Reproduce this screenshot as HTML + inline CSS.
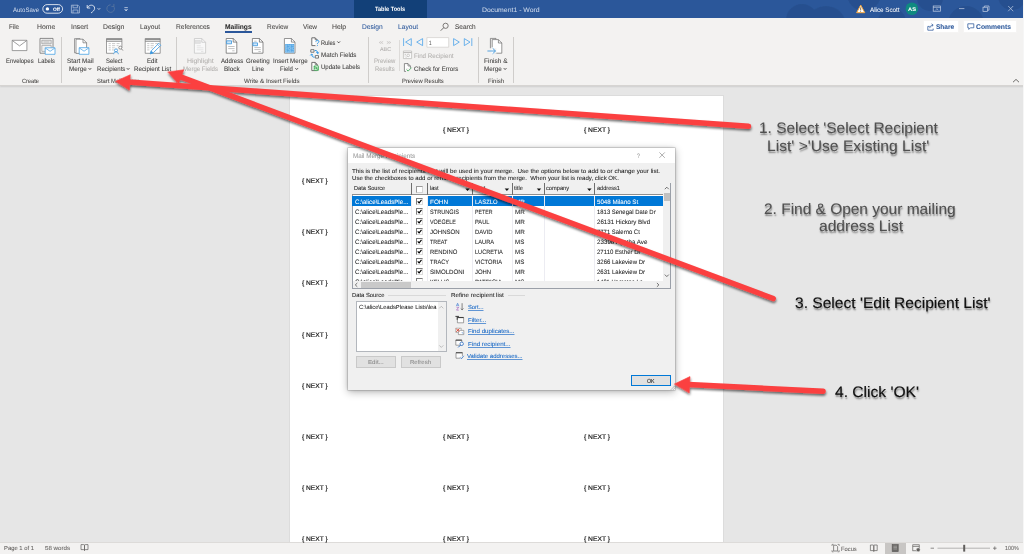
<!DOCTYPE html>
<html lang="en"><head><meta charset="utf-8"><title>Document1 - Word</title>
<style>
*{box-sizing:border-box;margin:0;padding:0}
html,body{width:1024px;height:554px;overflow:hidden;background:#e6e6e6;font-family:"Liberation Sans",sans-serif}
#app{position:relative;width:1024px;height:554px;overflow:hidden;background:#e6e6e6}
.a{position:absolute}
.t{position:absolute;white-space:nowrap;transform-origin:0 50%;display:block;text-rendering:geometricPrecision;-webkit-text-stroke:0.06px}
#titlebar{left:0;top:0;width:1024px;height:18px;background:#2b579a;overflow:hidden}
#tabletools{left:354px;top:0;width:73px;height:18px;background:#124078}
#ribbon{left:0;top:18px;width:1024px;height:67.6px;background:#f3f2f1;border-bottom:1px solid #d6d4d2;box-shadow:0 1px 1.5px rgba(0,0,0,0.10)}
.vsep{position:absolute;width:1px;background:#cfcdcb;top:36.5px;height:46px}
#docpage{left:289px;top:95px;width:434.5px;height:448px;background:#fff;border:1px solid #dcdcdc;border-bottom:none}
#status{left:0;top:542px;width:1024px;height:12px;background:#f3f2f1;border-top:1px solid #dddbd9}
svg{position:absolute;overflow:visible}
/* dialog */
#dlg{left:348px;top:148px;width:327px;height:242px;background:#f0f0f0;box-shadow:0 0 0 0.5px rgba(110,110,110,0.45),0 2px 8px rgba(0,0,0,0.30),0 0 3px rgba(0,0,0,0.16)}
#dlgtitle{left:0;top:0;width:100%;height:15px;background:#fff}
.btn{position:absolute;background:#e1e1e1;border:1px solid #c9c9c9}
.cb{position:absolute;width:6.8px;height:6.8px;background:#fff;border:1px solid;border-color:#7d7d7d #dcdcdc #dcdcdc #7d7d7d}
</style></head>
<body><div id="app">
<!-- ===== document area ===== -->
<div class="a" id="docpage"></div>
<!-- ===== title bar ===== -->
<div class="a" id="titlebar">
  <svg width="260" height="18" style="left:780px;top:0" viewBox="0 0 260 18"><defs><filter id="cb"><feGaussianBlur stdDeviation="0.7"/></filter></defs>
    <g fill="#27508f" filter="url(#cb)">
      <circle cx="22" cy="20" r="16"/><circle cx="46" cy="26" r="20"/><circle cx="84" cy="-6" r="17"/>
      <circle cx="112" cy="22" r="14"/><circle cx="150" cy="-2" r="13"/><circle cx="186" cy="24" r="18"/><circle cx="232" cy="-4" r="14"/>
    </g>
  </svg>
  <div class="a" id="tabletools"></div>
</div>
<svg width="140" height="18" style="left:0;top:0" viewBox="0 0 140 18">
  <g fill="none" stroke="#fff" stroke-width="0.8">
    <rect x="42.8" y="4.6" width="19.8" height="8.6" rx="4.3"/>
    <circle cx="47.4" cy="8.9" r="1.7" fill="#fff" stroke="none"/>
  </g>
  <g fill="none" stroke="#a9bbd8" stroke-width="0.8" stroke-linejoin="round">
    <path d="M71.4 5.2h6.6l1.4 1.4v6.4h-8z"/><path d="M73 5.2v2.6h4.4V5.2M73 13v-3h4.8v3"/>
  </g>
  <g fill="none" stroke="#e4eaf4" stroke-width="0.9">
    <path d="M87.2 5v3h3M87.4 7.8c1-1.8 2.4-2.6 4-2.6 2 0 3.2 1.3 3.2 3 0 2.2-1.8 3.4-3.6 4.8"/>
    <path d="M97.6 8.2l1.3 1.3 1.3-1.3" stroke-width="0.8"/>
  </g>
  <g fill="none" stroke="#56749f" stroke-width="0.9">
    <path d="M113.6 6.2a3.8 3.8 0 1 1-3-1.4M113.9 3.9v2.5h-2.5"/>
  </g>
  <g fill="none" stroke="#c9d5e8" stroke-width="0.8"><path d="M124.4 7.6h3.4"/><path d="M124.6 9.4l1.5 1.5 1.5-1.5" fill="#c9d5e8"/></g>
</svg>
<svg width="170" height="18" style="left:854px;top:0" viewBox="854 0 170 18">
  <path d="M860.7 5.1l4.1 7.6h-8.2z" fill="#fff" stroke="#f2a33a" stroke-width="1" stroke-linejoin="round"/>
  <path d="M860.7 7.4v3" stroke="#6b4a12" stroke-width="0.8"/><circle cx="860.7" cy="11.5" r="0.45" fill="#6b4a12"/>
  <circle cx="911.9" cy="8.7" r="6.3" fill="#0f8a80"/>
  <g fill="none" stroke="#c6d1e5" stroke-width="0.7">
    <rect x="933.2" y="6" width="7.4" height="5.2"/><path d="M933.2 7.4h7.4" stroke-width="0.6"/><path d="M935.6 9.9l1.3-1.2 1.3 1.2" stroke-width="0.7"/>
    <path d="M959 8.6h5.4"/>
    <rect x="983" y="7.2" width="4.6" height="4.2"/><path d="M984.4 7.2V6h4.6v4.2h-1.4"/>
    <path d="M1008.2 6l5 5.2M1013.2 6l-5 5.2"/>
  </g>
</svg>

<!-- ===== ribbon ===== -->
<div class="a" id="ribbon"></div>
<div class="a" style="left:225px;top:30.9px;width:26.6px;height:1.9px;background:#2b579a"></div>
<div class="vsep" style="left:61px"></div>
<div class="vsep" style="left:176px"></div>
<div class="vsep" style="left:367.5px"></div>
<div class="vsep" style="left:478px"></div>
<div class="vsep" style="left:513px"></div>
<div class="vsep" style="left:399.3px;top:40px;height:30.5px;background:#dddbd9"></div>
<svg width="520" height="50" style="left:0;top:34px" viewBox="0 34 520 50">
<g fill="none" stroke="#767676" stroke-width="0.7" stroke-linejoin="round">
  <!-- Envelopes -->
  <rect x="12.2" y="40.3" width="14.7" height="10.3" fill="#fff"/>
  <path d="M12.4 40.6l7.15 5.3 7.15-5.3"/>
  <!-- Labels -->
  <rect x="40" y="38.4" width="13" height="14.8" fill="#fafafa" stroke="#6e6e6e" stroke-width="0.8"/>
  <rect x="41.8" y="40.2" width="9.4" height="3.6" fill="#e4e4e4" stroke="#8a8a8a" stroke-width="0.6"/>
  <path d="M43.6 42h5.6" stroke="#9a9a9a" stroke-width="0.5"/>
  <rect x="41.8" y="45.4" width="9.4" height="6" fill="#f1f1f1" stroke="#8a8a8a" stroke-width="0.6"/>
  <rect x="45.2" y="47.8" width="9.8" height="6.5" fill="#fff" stroke="#4aa3e6" stroke-width="0.8"/>
  <path d="M45.4 48.1l4.7 3.2 4.7-3.2" stroke="#4aa3e6" stroke-width="0.75"/>
  <!-- Start Mail Merge -->
  <path d="M74.5 38.6h5.5v14.2h-5.5z" fill="#fafafa" stroke="#7a7a7a"/>
  <path d="M76 39.2h7l3.6 3.6v10.6h-10.6z" fill="#fff" stroke="#6e6e6e"/>
  <path d="M83 39.2v3.6h3.6" stroke="#6e6e6e"/>
  <rect x="79.2" y="47.7" width="9.7" height="6.6" fill="#fff" stroke="#4aa3e6" stroke-width="0.8"/>
  <path d="M79.4 48l4.65 3.2 4.65-3.2" stroke="#4aa3e6" stroke-width="0.75"/>
  <!-- Select Recipients -->
  <rect x="106.5" y="38.5" width="15.4" height="14.8" fill="#fff"/>
  <path d="M106.5 39.4h15.4M106.5 41.2h15.4" stroke-width="0.9"/>
  <g stroke="#9a9a9a" stroke-width="0.55"><path d="M108.6 43.6h2.2M112 43.6h3.2M116.6 43.6h3M108.6 45.7h2.2M112 45.7h3.2M116.6 45.7h2M108.6 47.8h2.2M112 47.8h3.2M108.6 49.9h2.2M112 49.9h2"/></g>
  <rect x="113.6" y="47.6" width="9.5" height="7" fill="#f3f2f1" stroke="none"/>
  <circle cx="120.3" cy="47.6" r="1.5" fill="#fff" stroke="#6a6a6a" stroke-width="0.7"/>
  <path d="M121.4 48.8l1.5 1.7" stroke="#6a6a6a" stroke-width="0.8"/>
  <circle cx="116" cy="50.4" r="1.5" fill="#fff" stroke="#3a96dd" stroke-width="0.8"/>
  <path d="M113.7 54.2c0-1.6 1-2.4 2.3-2.4s2.3 0.8 2.3 2.4" stroke="#3a96dd" stroke-width="0.8"/>
  <!-- Edit Recipient List -->
  <rect x="145.2" y="38.5" width="15" height="14.8" fill="#fff"/>
  <path d="M145.2 39.4h15M145.2 41.2h15" stroke-width="0.9"/>
  <g stroke="#9a9a9a" stroke-width="0.55"><path d="M147.2 43.6h2.2M150.6 43.6h3.2M155.2 43.6h3M147.2 45.7h2.2M150.6 45.7h3.2M147.2 47.8h2.2M150.6 47.8h2.2M147.2 49.9h2.2"/></g>
  <path d="M150.3 53.8l0.9-2.9 7.6-7.6 2 2-7.6 7.6z" fill="#fff" stroke="#3a96dd" stroke-width="0.8"/>
  <path d="M150.3 53.8l0.9-2.9 2 2z" fill="#3a96dd" stroke="#3a96dd" stroke-width="0.5"/>
  <path d="M157.6 44.5l2 2" stroke="#3a96dd" stroke-width="0.6"/>
  <!-- Highlight Merge Fields (disabled) -->
  <g stroke="#c3c3c3">
    <path d="M194.4 38.5h7.4l3.8 3.8v10.9h-11.2z" fill="#f8f8f8"/>
    <path d="M201.8 38.5v3.8h3.8"/>
    <rect x="195.2" y="40.4" width="5.2" height="3" fill="#e2e2e2" stroke="#d0d0d0" stroke-width="0.5"/>
    <path d="M196.8 45.8h4M196.8 47.8h6.6M196.8 49.8h6.6M201 51.6h2.4" stroke="#d2d2d2" stroke-width="0.55"/>
  </g>
  <!-- Address Block -->
  <path d="M226.2 38.5h7l3.6 3.6v11.1h-10.6z" fill="#fff" stroke="#5e5e5e"/>
  <path d="M233.2 38.5v3.6h3.6" stroke="#5e5e5e"/>
  <rect x="226.6" y="40.8" width="4.9" height="3" fill="#cfe6f8" stroke="#3a96dd" stroke-width="0.8"/>
  <path d="M228.2 46.5h6.4M228.2 48.6h6.4M232.2 50.8h2.4" stroke="#9a9a9a" stroke-width="0.6"/>
  <!-- Greeting Line -->
  <path d="M252.4 38.5h7l3.6 3.6v11.1h-10.6z" fill="#fff" stroke="#5e5e5e"/>
  <path d="M259.4 38.5v3.6h3.6" stroke="#5e5e5e"/>
  <path d="M254.2 41.2h2.4" stroke="#9a9a9a" stroke-width="0.6"/>
  <rect x="252.9" y="42.9" width="4.6" height="2.8" fill="#cfe6f8" stroke="#3a96dd" stroke-width="0.8"/>
  <path d="M254.4 47.6h6.4M254.4 49.6h6.4M258.4 51.5h2.4" stroke="#9a9a9a" stroke-width="0.6"/>
  <!-- Insert Merge Field -->
  <path d="M284.4 38.5h7l3.6 3.6v11.1h-10.6z" fill="#fff" stroke="#6a6a6a"/>
  <path d="M291.4 38.5v3.6h3.6" stroke="#6a6a6a"/>
  <rect x="285.2" y="44" width="9" height="8.6" fill="#56a8e6" stroke="none"/>
  <g stroke="#cfe6f8" stroke-width="0.55" stroke-dasharray="1 0.6"><rect x="286.2" y="45.1" width="3" height="2.8"/><rect x="290.2" y="45.1" width="3" height="2.8"/><rect x="286.2" y="48.9" width="3" height="2.8"/><rect x="290.2" y="48.9" width="3" height="2.8"/></g>
  <!-- Rules -->
  <path d="M311.8 37.8h3.4l2 2v5.8h-5.4z" fill="#fff" stroke="#585858" stroke-width="0.85"/>
  <path d="M315.2 37.8v2h2" stroke="#585858" stroke-width="0.7"/>
  <rect x="315.4" y="40.3" width="4" height="6" fill="#f3f2f1" stroke="none"/>
  <path d="M315.9 41.7c0-0.9 0.6-1.4 1.5-1.4s1.5 0.5 1.5 1.3c0 1.1-1.5 1.1-1.5 2.3" stroke="#2f97e8" stroke-width="1"/>
  <circle cx="317.4" cy="45.3" r="0.55" fill="#2f97e8" stroke="none"/>
  <!-- Match Fields -->
  <rect x="310.8" y="49.7" width="3.2" height="2.5" fill="#fff" stroke="#585858" stroke-width="0.8"/>
  <rect x="315.3" y="55.6" width="3.2" height="2.5" fill="#fff" stroke="#585858" stroke-width="0.8"/>
  <path d="M314.8 50.4c2 0 2.9 0.9 2.9 2.8M316.3 52.3l1.4 1.4 1.4-1.4" stroke="#2f97e8" stroke-width="1"/>
  <path d="M314.6 57.2c-2 0-2.9-0.9-2.9-2.8M310.3 55.4l1.4-1.4 1.4 1.4" stroke="#2f97e8" stroke-width="1"/>
  <!-- Update Labels -->
  <path d="M311.8 62.4h3.4l2 2v6.2h-5.4z" fill="#fff" stroke="#585858" stroke-width="0.85"/>
  <path d="M315.2 62.4v2h2" stroke="#585858" stroke-width="0.7"/>
  <rect x="313.7" y="65.5" width="5.2" height="5.2" rx="0.8" fill="#4db263" stroke="none"/>
  <path d="M315 67.6a1.5 1.5 0 0 1 2.6-0.6M317.7 68.5a1.5 1.5 0 0 1-2.6 0.6" stroke="#fff" stroke-width="0.7"/>
  <path d="M317.8 66.1v1.1h-1.1M314.9 70v-1.1h1.1" stroke="#fff" stroke-width="0.6"/>
  <!-- Preview Results icon (disabled) -->
  <g stroke="#bdbbb9" stroke-width="0.6"><path d="M381.2 41.3l-2 1.2 2 1.2M383.2 41.3l-2 1.2 2 1.2M386.8 41.3l2 1.2-2 1.2M388.8 41.3l2 1.2-2 1.2"/></g>
  <!-- record nav -->
  <g stroke="#4aa2ea" stroke-width="0.8">
    <path d="M403.6 38.2v7.8"/><path d="M411.3 38.6v7l-5.7-3.5z"/>
    <path d="M422.6 38.6v7l-5.9-3.5z"/>
    <path d="M453.6 38.6v7l5.7-3.5z"/>
    <path d="M464.3 38.6v7l5.7-3.5z"/><path d="M471.8 38.2v7.8"/>
  </g>
  <rect x="426.9" y="37.6" width="21.8" height="9.6" fill="#fff" stroke="#d0cecc" stroke-width="0.7"/>
  <!-- Find Recipient icon (disabled) -->
  <g stroke="#b9b7b5" stroke-width="0.7">
    <rect x="403.4" y="51" width="8.2" height="7.6" fill="#fafafa"/>
    <path d="M403.4 52.6h8.2" stroke-width="1"/>
    <circle cx="408.2" cy="55.4" r="1.3"/><path d="M407.2 56.4l-1.4 1.4"/>
    <path d="M404.6 54.4h1.4M404.6 56h1"/>
  </g>
  <!-- Check for Errors -->
  <path d="M404.4 63.6h3.6l2.4 2.4v5.4h-6z" fill="#fff" stroke="#5e5e5e" stroke-width="0.7"/>
  <path d="M408 63.6v2.4h2.4" stroke="#5e5e5e" stroke-width="0.6"/>
  <rect x="406" y="68" width="6" height="4" fill="#f3f2f1" stroke="none"/>
  <path d="M406.6 69.6l1.5 1.5 3.4-3.4" stroke="#3aa655" stroke-width="0.85"/>
  <!-- Finish & Merge -->
  <path d="M490.4 38.4h5.6v1.2" stroke="#6a6a6a"/>
  <path d="M490.4 38.4v13" stroke="#6a6a6a"/>
  <path d="M492.2 39.6h6.2l3.4 3.4v10.2h-9.6z" fill="#fff" stroke="#6a6a6a"/>
  <path d="M498.4 39.6v3.4h3.4" stroke="#6a6a6a"/>
  <rect x="487" y="48.2" width="9.4" height="5.6" fill="#f3f2f1" stroke="none"/>
  <path d="M492.2 47v6.2h2" stroke="#fff" stroke-width="1.2"/>
  <path d="M487.4 51h8M492.6 48.2l2.9 2.8-2.9 2.8" stroke="#3a96dd" stroke-width="0.85"/>
</g>
<!-- dropdown chevrons -->
<g fill="none" stroke="#3b3a39" stroke-width="0.95">
  <path d="M88.6 68.2l1.3 1.3 1.3-1.3"/>
  <path d="M126.8 68.2l1.3 1.3 1.3-1.3"/>
  <path d="M295.4 68.2l1.3 1.3 1.3-1.3"/>
  <path d="M337.4 41.5l1.3 1.3 1.3-1.3"/>
  <path d="M503.8 68.2l1.3 1.3 1.3-1.3"/>
</g>
</svg>
<!-- search, share, comments, collapse -->
<svg width="10" height="10" style="left:439.6px;top:21.6px" viewBox="0 0 10 10"><circle cx="5.6" cy="3.8" r="2.6" fill="none" stroke="#5f5d5b" stroke-width="0.8"/><path d="M3.7 5.7L0.7 8.7" stroke="#5f5d5b" stroke-width="0.9"/></svg>
<div class="a" style="left:923px;top:20px;width:36px;height:12.5px;background:#fff;border:1px solid #f5f4f3;border-radius:1px"></div>
<div class="a" style="left:963px;top:20px;width:54px;height:12.5px;background:#fff;border:1px solid #f5f4f3;border-radius:1px"></div>
<svg width="8" height="8" style="left:926.6px;top:22.6px" viewBox="0 0 8 8"><g fill="none" stroke="#2b579a" stroke-width="0.75"><path d="M2.6 3.4H0.8v3.8h5.4V5.6"/><path d="M2.8 5.2c0-2 1.2-3 3-3M4.6 0.8l1.6 1.4-1.6 1.4"/></g></svg>
<svg width="8" height="8" style="left:966.6px;top:22.8px" viewBox="0 0 8 8"><path d="M0.8 0.8h6v4h-3.4l-1.6 1.6v-1.6h-1z" fill="none" stroke="#2b579a" stroke-width="0.75" stroke-linejoin="round"/></svg>
<svg width="8" height="6" style="left:1011.6px;top:78.2px" viewBox="0 0 8 6"><path d="M1 4.2l3-2.8 3 2.8" fill="none" stroke="#5f5d5b" stroke-width="0.9"/></svg>

<!-- ===== status bar ===== -->
<div class="a" id="status"></div>
<svg width="10" height="10" style="left:79.6px;top:543.4px" viewBox="0 0 10 10"><g fill="none" stroke="#605e5c" stroke-width="0.7"><path d="M1 1.6h2.6c0.6 0 0.9 0.3 0.9 0.8V7.4c0-0.5-0.3-0.8-0.9-0.8H1zM8 1.6H5.4c-0.6 0-0.9 0.3-0.9 0.8V7.4c0-0.5 0.3-0.8 0.9-0.8H8z"/></g></svg>
<div class="a" style="left:884.8px;top:542.6px;width:20.8px;height:11.4px;background:#c8c6c4"></div>
<svg width="200" height="12" style="left:828px;top:542px" viewBox="828 542 200 12">
  <g fill="none" stroke="#605e5c" stroke-width="0.7">
    <path d="M833.6 545.2h2.6l1.4 1.4v4.4h-4z"/><path d="M832 546v-1.6h1.6M839.2 550.2v1.6h-1.6M832 550.2v1.6h1.6M837.6 544.4h1.6v1.6" stroke-width="0.6"/>
    <path d="M870.4 545h2.6c0.5 0 0.8 0.3 0.8 0.7v5.6c0-0.4-0.3-0.7-0.8-0.7h-2.6zM877.2 545h-2.6c-0.5 0-0.8 0.3-0.8 0.7v5.6c0-0.4 0.3-0.7 0.8-0.7h2.6z"/>
    <rect x="892.2" y="544.6" width="6" height="7" fill="#6b6967"/>
    <path d="M893.4 546.2h3.6M893.4 547.6h3.6M893.4 549h3.6" stroke="#c8c6c4" stroke-width="0.5"/>
    <rect x="912.8" y="544.8" width="6.4" height="6"/><path d="M912.8 546.4h6.4"/>
    <circle cx="918.2" cy="549.8" r="2" fill="#605e5c" stroke="#f3f2f1" stroke-width="0.5"/>
    <path d="M930.6 548.2h3.4"/>
    <path d="M937.5 548.2h52.5" stroke="#8a8886" stroke-width="0.6"/>
    <rect x="963.2" y="544.8" width="2" height="6.8" fill="#605e5c" stroke="none"/>
    <path d="M993 548.2h3.6M994.8 546.4v3.6"/>
  </g>
</svg>

<!-- ===== dialog ===== -->
<div class="a" id="dlg"><div class="a" id="dlgtitle"></div></div>
<svg width="8" height="8" style="left:659.4px;top:152.2px" viewBox="0 0 8 8"><path d="M0.4 0.4 L5.8 5.8 M5.8 0.4 L0.4 5.8" stroke="#8c8c8c" stroke-width="0.7" fill="none"/></svg>
<!-- table -->
<div class="a" style="left:351.5px;top:182.5px;width:319.7px;height:106.6px;background:#fff;border:1px solid #9a9fa8"></div>
<div class="a" style="left:352px;top:183px;width:310.5px;height:12.2px;background:#f0f0f0;border-bottom:0.7px solid #8f8f8f"></div>
<!-- selected row -->
<div class="a" style="left:352px;top:196px;width:59.5px;height:9.6px;background:#0078d7"></div>
<div class="a" style="left:427.5px;top:196px;width:235px;height:9.6px;background:#0078d7"></div>
<!-- column separators -->
<div class="a" style="left:411.2px;top:183px;width:0.7px;height:12.2px;background:#6e6e6e"></div>
<div class="a" style="left:427.2px;top:183px;width:0.7px;height:12.2px;background:#6e6e6e"></div>
<div class="a" style="left:472.2px;top:183px;width:0.7px;height:12.2px;background:#6e6e6e"></div>
<div class="a" style="left:512.2px;top:183px;width:0.7px;height:12.2px;background:#6e6e6e"></div>
<div class="a" style="left:544.1px;top:183px;width:0.7px;height:12.2px;background:#6e6e6e"></div>
<div class="a" style="left:594.3px;top:183px;width:0.7px;height:12.2px;background:#6e6e6e"></div>
<div class="a" style="left:411.2px;top:195.5px;width:0.6px;height:85.5px;background:#ececf2"></div>
<div class="a" style="left:427.2px;top:195.5px;width:0.6px;height:85.5px;background:#ececf2"></div>
<div class="a" style="left:472.2px;top:195.5px;width:0.6px;height:85.5px;background:#ececf2"></div>
<div class="a" style="left:512.2px;top:195.5px;width:0.6px;height:85.5px;background:#ececf2"></div>
<div class="a" style="left:544.1px;top:195.5px;width:0.6px;height:85.5px;background:#ececf2"></div>
<div class="a" style="left:594.3px;top:195.5px;width:0.6px;height:85.5px;background:#ececf2"></div>
<!-- header dropdown arrows -->
<svg width="320" height="14" style="left:352px;top:183px" viewBox="352 183 320 14">
  <g fill="#111"><path d="M465.3 188.6h4.4l-2.2 2.4z"/><path d="M504.7 188.6h4.4l-2.2 2.4z"/><path d="M536.8 188.6h4.4l-2.2 2.4z"/><path d="M587.2 188.6h4.4l-2.2 2.4z"/></g>
</svg>
<!-- scrollbars -->
<div class="a" style="left:663px;top:183px;width:7px;height:105px;background:#f0f0f0"></div>
<div class="a" style="left:664.3px;top:192.5px;width:5.6px;height:8.6px;background:#c1c1c1"></div>
<div class="a" style="left:353px;top:281px;width:310px;height:7px;background:#f0f0f0"></div>
<div class="a" style="left:361px;top:281.6px;width:50px;height:6.6px;background:#c9c9c9"></div>
<svg width="320" height="108" style="left:352px;top:183px" viewBox="352 183 320 108">
  <g fill="none" stroke="#505050" stroke-width="0.8">
    <path d="M664.8 189.2l2-2 2 2"/><path d="M664.8 274.6l2 2 2-2"/>
    <path d="M357.3 283l-2 1.9 2 1.9"/><path d="M656.9 283l2 1.9-2 1.9"/>
  </g>
</svg>
<!-- checkboxes -->
<div class="cb" style="left:416px;top:185.6px;width:7.2px;height:7.5px;border-color:#9a9a9a #d4d4d4 #d4d4d4 #9a9a9a"></div>
<div class="cb" style="left:416px;top:197.8px"></div>
<svg width="7" height="7" style="left:416px;top:197.8px" viewBox="0 0 7 7"><path d="M1.7 3.4l1.4 1.5 2.4-3" fill="none" stroke="#000" stroke-width="1.15"/></svg>
<div class="cb" style="left:416px;top:208.0px"></div>
<svg width="7" height="7" style="left:416px;top:208.0px" viewBox="0 0 7 7"><path d="M1.7 3.4l1.4 1.5 2.4-3" fill="none" stroke="#000" stroke-width="1.15"/></svg>
<div class="cb" style="left:416px;top:218.0px"></div>
<svg width="7" height="7" style="left:416px;top:218.0px" viewBox="0 0 7 7"><path d="M1.7 3.4l1.4 1.5 2.4-3" fill="none" stroke="#000" stroke-width="1.15"/></svg>
<div class="cb" style="left:416px;top:228.0px"></div>
<svg width="7" height="7" style="left:416px;top:228.0px" viewBox="0 0 7 7"><path d="M1.7 3.4l1.4 1.5 2.4-3" fill="none" stroke="#000" stroke-width="1.15"/></svg>
<div class="cb" style="left:416px;top:238.0px"></div>
<svg width="7" height="7" style="left:416px;top:238.0px" viewBox="0 0 7 7"><path d="M1.7 3.4l1.4 1.5 2.4-3" fill="none" stroke="#000" stroke-width="1.15"/></svg>
<div class="cb" style="left:416px;top:248.1px"></div>
<svg width="7" height="7" style="left:416px;top:248.1px" viewBox="0 0 7 7"><path d="M1.7 3.4l1.4 1.5 2.4-3" fill="none" stroke="#000" stroke-width="1.15"/></svg>
<div class="cb" style="left:416px;top:258.1px"></div>
<svg width="7" height="7" style="left:416px;top:258.1px" viewBox="0 0 7 7"><path d="M1.7 3.4l1.4 1.5 2.4-3" fill="none" stroke="#000" stroke-width="1.15"/></svg>
<div class="cb" style="left:416px;top:268.1px"></div>
<svg width="7" height="7" style="left:416px;top:268.1px" viewBox="0 0 7 7"><path d="M1.7 3.4l1.4 1.5 2.4-3" fill="none" stroke="#000" stroke-width="1.15"/></svg>
<div class="cb" style="left:416px;top:278.2px;height:2.8px;border-bottom:none"></div>
<!-- data source group -->
<div class="a" style="left:388px;top:294.5px;width:58px;height:0.6px;background:#d9d9d9"></div>
<div class="a" style="left:508px;top:294.5px;width:17px;height:0.6px;background:#d9d9d9"></div>
<div class="a" style="left:356.2px;top:301.2px;width:90.5px;height:50.4px;background:#fff;border:1px solid #b3b7bd"></div>
<div class="a" style="left:437.6px;top:301.8px;width:8.5px;height:49.2px;background:#f0f0f0"></div>
<svg width="10" height="50" style="left:437px;top:302px" viewBox="437 302 10 50"><g fill="none" stroke="#a6a6a6" stroke-width="0.7"><path d="M439.3 308.3l2-2 2 2"/><path d="M439.3 345.4l2 2 2-2"/></g></svg>
<div class="btn" style="left:356.2px;top:356.2px;width:39.4px;height:11.6px"></div>
<div class="btn" style="left:401.2px;top:356.2px;width:39.4px;height:11.6px"></div>
<div class="btn" style="left:631.2px;top:374.9px;width:39.6px;height:11.4px;border:1px solid #0078d7"></div>
<svg width="6" height="6" style="left:669.6px;top:384.8px" viewBox="0 0 6 6"><path d="M0.6 5l4.4-4.4M2.8 5l2.2-2.2" stroke="#a8a8a8" stroke-width="0.7" fill="none"/></svg>
<svg width="14" height="62" style="left:453px;top:300px" viewBox="453 300 14 62">
<g fill="none" stroke-linejoin="round">
  <!-- sort -->
  <path d="M456.3 306.2l1.3-3 1.3 3M456.8 305.2h1.6" stroke="#3c7bd0" stroke-width="0.6"/>
  <path d="M456.5 307.3h2.2l-2.2 2.8h2.3" stroke="#9a4fb5" stroke-width="0.6"/>
  <path d="M462.1 303.2v6.6M460.7 308.5l1.4 1.4 1.4-1.4" stroke="#555" stroke-width="0.7"/>
  <!-- filter -->
  <rect x="457.4" y="317.4" width="6.2" height="5.4" fill="#fdfdfd" stroke="#666" stroke-width="0.6"/>
  <path d="M457.4 317.6h6.2" stroke="#333" stroke-width="1"/>
  <path d="M455.4 316.4h3.6M457.2 316.4v3.4" stroke="#333" stroke-width="0.9"/>
  <!-- find duplicates -->
  <rect x="455.8" y="328.2" width="5.4" height="4.2" fill="#fdfdfd" stroke="#888" stroke-width="0.6"/>
  <rect x="458.4" y="330.4" width="5.4" height="4.2" fill="#fdfdfd" stroke="#777" stroke-width="0.6"/>
  <path d="M462 332.2l1 1.4" stroke="#3c7bd0" stroke-width="0.7"/>
  <path d="M456.2 328.6l3.2 3.2M459.4 328.6l-3.2 3.2" stroke="#e0442e" stroke-width="0.9"/>
  <!-- find recipient -->
  <rect x="455.8" y="340" width="6" height="5.2" fill="#fdfdfd" stroke="#666" stroke-width="0.6"/>
  <path d="M455.8 340.2h6" stroke="#444" stroke-width="1"/>
  <circle cx="461.7" cy="343.8" r="1.7" fill="#fdfdfd" stroke="#2f6fc4" stroke-width="0.8"/>
  <path d="M460.4 345.2l-2.2 2.2" stroke="#2f6fc4" stroke-width="1"/>
  <!-- validate -->
  <rect x="456" y="352.6" width="6.4" height="5.6" fill="#fdfdfd" stroke="#666" stroke-width="0.6"/>
  <path d="M456 352.8h6.4" stroke="#444" stroke-width="1"/>
  <rect x="460" y="356" width="4.4" height="3.6" fill="#f0f0f0" stroke="none"/>
  <path d="M460.2 357.4l1.2 1.4 2.4-3" stroke="#2f6fc4" stroke-width="0.8"/>
</g></svg>

<!-- ===== all text ===== -->
<span class="t" id="t0" style="left:12.50px;top:6.00px;font-size:6.4px;line-height:10px;color:#d3ddee;transform:scaleX(0.9416);-webkit-text-stroke:0;">AutoSave</span>
<span class="t" id="t1" style="left:52.60px;top:5.00px;font-size:5.0px;line-height:10px;color:#ffffff;font-weight:700;transform:scaleX(0.9676);">Off</span>
<span class="t" id="t2" style="left:375.20px;top:5.00px;font-size:6.3px;line-height:10px;color:#ffffff;font-weight:700;transform:scaleX(0.8837);-webkit-text-stroke:0;">Table Tools</span>
<span class="t" id="t3" style="left:482.00px;top:6.00px;font-size:6.5px;line-height:10px;color:#c9d5e8;transform:scaleX(1.0599);">Document1  -  Word</span>
<span class="t" id="t4" style="left:870.20px;top:6.00px;font-size:6.5px;line-height:10px;color:#ffffff;transform:scaleX(0.9603);-webkit-text-stroke:0.04px;">Alice Scott</span>
<span class="t" id="t5" style="left:907.90px;top:5.00px;font-size:5.2px;line-height:10px;color:#ffffff;font-weight:700;transform:scaleX(1.1082);">AS</span>
<span class="t" id="t6" style="left:9.00px;top:23.00px;font-size:6.8px;line-height:10px;color:#484644;transform:scaleX(0.9130);">File</span>
<span class="t" id="t7" style="left:36.70px;top:23.00px;font-size:6.8px;line-height:10px;color:#484644;transform:scaleX(1.0088);">Home</span>
<span class="t" id="t8" style="left:70.60px;top:23.00px;font-size:6.8px;line-height:10px;color:#484644;transform:scaleX(1.0118);">Insert</span>
<span class="t" id="t9" style="left:103.40px;top:23.00px;font-size:6.8px;line-height:10px;color:#484644;transform:scaleX(1.0061);">Design</span>
<span class="t" id="t10" style="left:140.20px;top:23.00px;font-size:6.8px;line-height:10px;color:#484644;transform:scaleX(0.9793);">Layout</span>
<span class="t" id="t11" style="left:175.80px;top:23.00px;font-size:6.8px;line-height:10px;color:#484644;transform:scaleX(0.9751);">References</span>
<span class="t" id="t12" style="left:266.60px;top:23.00px;font-size:6.8px;line-height:10px;color:#484644;transform:scaleX(0.9508);">Review</span>
<span class="t" id="t13" style="left:303.00px;top:23.00px;font-size:6.8px;line-height:10px;color:#484644;transform:scaleX(0.9583);">View</span>
<span class="t" id="t14" style="left:331.90px;top:23.00px;font-size:6.8px;line-height:10px;color:#484644;transform:scaleX(1.0083);">Help</span>
<span class="t" id="t15" style="left:225.00px;top:23.00px;font-size:6.8px;line-height:10px;color:#2b2b2b;font-weight:700;transform:scaleX(0.9778);">Mailings</span>
<span class="t" id="t16" style="left:361.60px;top:23.00px;font-size:6.8px;line-height:10px;color:#2b579a;transform:scaleX(0.9777);">Design</span>
<span class="t" id="t17" style="left:397.80px;top:23.00px;font-size:6.8px;line-height:10px;color:#2b579a;transform:scaleX(0.9891);">Layout</span>
<span class="t" id="t18" style="left:455.00px;top:23.00px;font-size:6.8px;line-height:10px;color:#484644;transform:scaleX(0.9561);">Search</span>
<span class="t" id="t19" style="left:935.60px;top:23.00px;font-size:6.8px;line-height:10px;color:#2b579a;font-weight:700;transform:scaleX(0.9529);">Share</span>
<span class="t" id="t20" style="left:976.00px;top:23.00px;font-size:6.8px;line-height:10px;color:#2b579a;font-weight:700;transform:scaleX(0.9964);">Comments</span>
<span class="t" id="t21" style="left:5.60px;top:57.00px;font-size:6.5px;line-height:10px;color:#3b3a39;transform:scaleX(0.9091);">Envelopes</span>
<span class="t" id="t22" style="left:37.90px;top:57.00px;font-size:6.5px;line-height:10px;color:#3b3a39;transform:scaleX(0.8874);">Labels</span>
<span class="t" id="t23" style="left:67.20px;top:57.00px;font-size:6.5px;line-height:10px;color:#3b3a39;transform:scaleX(0.9671);">Start Mail</span>
<span class="t" id="t24" style="left:68.80px;top:65.00px;font-size:6.5px;line-height:10px;color:#3b3a39;transform:scaleX(0.9654);">Merge</span>
<span class="t" id="t25" style="left:105.60px;top:57.00px;font-size:6.5px;line-height:10px;color:#3b3a39;transform:scaleX(0.9072);">Select</span>
<span class="t" id="t26" style="left:96.60px;top:65.00px;font-size:6.5px;line-height:10px;color:#3b3a39;transform:scaleX(0.9355);">Recipients</span>
<span class="t" id="t27" style="left:147.10px;top:57.00px;font-size:6.5px;line-height:10px;color:#3b3a39;transform:scaleX(0.9372);">Edit</span>
<span class="t" id="t28" style="left:133.75px;top:65.00px;font-size:6.5px;line-height:10px;color:#3b3a39;transform:scaleX(0.9518);">Recipient List</span>
<span class="t" id="t29" style="left:186.90px;top:57.00px;font-size:6.5px;line-height:10px;color:#b1afad;transform:scaleX(1.0555);">Highlight</span>
<span class="t" id="t30" style="left:182.80px;top:65.00px;font-size:6.5px;line-height:10px;color:#b1afad;transform:scaleX(0.9314);">Merge Fields</span>
<span class="t" id="t31" style="left:220.70px;top:57.00px;font-size:6.5px;line-height:10px;color:#3b3a39;transform:scaleX(0.9305);">Address</span>
<span class="t" id="t32" style="left:224.30px;top:65.00px;font-size:6.5px;line-height:10px;color:#3b3a39;transform:scaleX(0.9870);">Block</span>
<span class="t" id="t33" style="left:245.80px;top:57.00px;font-size:6.5px;line-height:10px;color:#3b3a39;transform:scaleX(0.9504);">Greeting</span>
<span class="t" id="t34" style="left:252.00px;top:65.00px;font-size:6.5px;line-height:10px;color:#3b3a39;transform:scaleX(0.9677);">Line</span>
<span class="t" id="t35" style="left:272.60px;top:57.00px;font-size:6.5px;line-height:10px;color:#3b3a39;transform:scaleX(0.9479);">Insert Merge</span>
<span class="t" id="t36" style="left:280.40px;top:65.00px;font-size:6.5px;line-height:10px;color:#3b3a39;transform:scaleX(0.9153);">Field</span>
<span class="t" id="t37" style="left:320.90px;top:39.00px;font-size:6.5px;line-height:10px;color:#3b3a39;transform:scaleX(0.8662);">Rules</span>
<span class="t" id="t38" style="left:320.90px;top:51.00px;font-size:6.5px;line-height:10px;color:#3b3a39;transform:scaleX(0.9604);">Match Fields</span>
<span class="t" id="t39" style="left:320.90px;top:63.00px;font-size:6.5px;line-height:10px;color:#3b3a39;transform:scaleX(0.9303);">Update Labels</span>
<span class="t" id="t40" style="left:379.50px;top:45.00px;font-size:5.6px;line-height:10px;color:#b1afad;transform:scaleX(0.9552);">ABC</span>
<span class="t" id="t41" style="left:373.70px;top:57.00px;font-size:6.5px;line-height:10px;color:#b1afad;transform:scaleX(0.9211);">Preview</span>
<span class="t" id="t42" style="left:374.60px;top:65.00px;font-size:6.5px;line-height:10px;color:#b1afad;transform:scaleX(0.9037);">Results</span>
<span class="t" id="t43" style="left:428.80px;top:39.00px;font-size:6.3px;line-height:10px;color:#5a5a5a;transform:scaleX(0.7396);">1</span>
<span class="t" id="t44" style="left:413.70px;top:52.00px;font-size:6.5px;line-height:10px;color:#b1afad;transform:scaleX(0.9528);">Find Recipient</span>
<span class="t" id="t45" style="left:413.70px;top:65.00px;font-size:6.5px;line-height:10px;color:#3b3a39;transform:scaleX(0.9360);">Check for Errors</span>
<span class="t" id="t46" style="left:484.40px;top:57.00px;font-size:6.5px;line-height:10px;color:#3b3a39;transform:scaleX(1.0007);">Finish &amp;</span>
<span class="t" id="t47" style="left:484.00px;top:65.00px;font-size:6.5px;line-height:10px;color:#3b3a39;transform:scaleX(0.9654);">Merge</span>
<span class="t" id="t48" style="left:22.00px;top:77.00px;font-size:6.2px;line-height:10px;color:#4a4846;transform:scaleX(0.9151);">Create</span>
<span class="t" id="t49" style="left:96.60px;top:77.00px;font-size:6.2px;line-height:10px;color:#4a4846;transform:scaleX(0.9473);">Start Mail Merge</span>
<span class="t" id="t50" style="left:244.10px;top:77.00px;font-size:6.2px;line-height:10px;color:#4a4846;transform:scaleX(1.0001);">Write &amp; Insert Fields</span>
<span class="t" id="t51" style="left:401.80px;top:77.00px;font-size:6.2px;line-height:10px;color:#4a4846;transform:scaleX(0.9400);">Preview Results</span>
<span class="t" id="t52" style="left:487.90px;top:77.00px;font-size:6.2px;line-height:10px;color:#4a4846;transform:scaleX(0.9748);">Finish</span>
<span class="t" id="t53" style="left:442.60px;top:126.00px;font-size:6.6px;line-height:10px;color:#1a1a1a;transform:scaleX(1.0217);-webkit-text-stroke:0.18px;">{ NEXT }</span>
<span class="t" id="t54" style="left:584.10px;top:126.00px;font-size:6.6px;line-height:10px;color:#1a1a1a;transform:scaleX(1.0217);-webkit-text-stroke:0.18px;">{ NEXT }</span>
<span class="t" id="t55" style="left:302.10px;top:177.00px;font-size:6.6px;line-height:10px;color:#1a1a1a;transform:scaleX(1.0040);-webkit-text-stroke:0.18px;">{ NEXT }</span>
<span class="t" id="t56" style="left:302.10px;top:228.00px;font-size:6.6px;line-height:10px;color:#1a1a1a;transform:scaleX(1.0040);-webkit-text-stroke:0.18px;">{ NEXT }</span>
<span class="t" id="t57" style="left:302.10px;top:279.00px;font-size:6.6px;line-height:10px;color:#1a1a1a;transform:scaleX(1.0040);-webkit-text-stroke:0.18px;">{ NEXT }</span>
<span class="t" id="t58" style="left:302.10px;top:331.00px;font-size:6.6px;line-height:10px;color:#1a1a1a;transform:scaleX(1.0040);-webkit-text-stroke:0.18px;">{ NEXT }</span>
<span class="t" id="t59" style="left:302.10px;top:382.00px;font-size:6.6px;line-height:10px;color:#1a1a1a;transform:scaleX(1.0040);-webkit-text-stroke:0.18px;">{ NEXT }</span>
<span class="t" id="t60" style="left:302.10px;top:433.00px;font-size:6.6px;line-height:10px;color:#1a1a1a;transform:scaleX(1.0040);-webkit-text-stroke:0.18px;">{ NEXT }</span>
<span class="t" id="t61" style="left:442.60px;top:433.00px;font-size:6.6px;line-height:10px;color:#1a1a1a;transform:scaleX(1.0217);-webkit-text-stroke:0.18px;">{ NEXT }</span>
<span class="t" id="t62" style="left:584.10px;top:433.00px;font-size:6.6px;line-height:10px;color:#1a1a1a;transform:scaleX(1.0217);-webkit-text-stroke:0.18px;">{ NEXT }</span>
<span class="t" id="t63" style="left:302.10px;top:484.00px;font-size:6.6px;line-height:10px;color:#1a1a1a;transform:scaleX(1.0040);-webkit-text-stroke:0.18px;">{ NEXT }</span>
<span class="t" id="t64" style="left:442.60px;top:484.00px;font-size:6.6px;line-height:10px;color:#1a1a1a;transform:scaleX(1.0217);-webkit-text-stroke:0.18px;">{ NEXT }</span>
<span class="t" id="t65" style="left:584.10px;top:484.00px;font-size:6.6px;line-height:10px;color:#1a1a1a;transform:scaleX(1.0217);-webkit-text-stroke:0.18px;">{ NEXT }</span>
<span class="t" id="t66" style="left:302.10px;top:535.00px;font-size:6.6px;line-height:10px;color:#1a1a1a;transform:scaleX(1.0040);-webkit-text-stroke:0.18px;">{ NEXT }</span>
<span class="t" id="t67" style="left:442.60px;top:535.00px;font-size:6.6px;line-height:10px;color:#1a1a1a;transform:scaleX(1.0217);-webkit-text-stroke:0.18px;">{ NEXT }</span>
<span class="t" id="t68" style="left:584.10px;top:535.00px;font-size:6.6px;line-height:10px;color:#1a1a1a;transform:scaleX(1.0217);-webkit-text-stroke:0.18px;">{ NEXT }</span>
<span class="t" id="t69" style="left:4.00px;top:544.00px;font-size:5.9px;line-height:10px;color:#605e5c;transform:scaleX(0.9953);">Page 1 of 1</span>
<span class="t" id="t70" style="left:45.00px;top:544.00px;font-size:5.9px;line-height:10px;color:#605e5c;transform:scaleX(1.0458);">58 words</span>
<span class="t" id="t71" style="left:841.00px;top:545.00px;font-size:6.1px;line-height:10px;color:#605e5c;transform:scaleX(0.9483);">Focus</span>
<span class="t" id="t72" style="left:1004.75px;top:544.00px;font-size:5.9px;line-height:10px;color:#605e5c;transform:scaleX(0.9119);">100%</span>
<span class="t" id="t73" style="left:758.70px;top:120.00px;font-size:15.2px;line-height:18px;color:#505050;transform:scaleX(1.0161);text-shadow:0.6px 1.6px 1.6px rgba(0,0,0,0.45);">1. Select 'Select Recipient</span>
<span class="t" id="t74" style="left:767.20px;top:138.00px;font-size:15.2px;line-height:18px;color:#505050;transform:scaleX(1.0293);text-shadow:0.6px 1.6px 1.6px rgba(0,0,0,0.45);">List' &gt;'Use Existing List'</span>
<span class="t" id="t75" style="left:764.20px;top:201.00px;font-size:15.2px;line-height:18px;color:#505050;transform:scaleX(1.0178);text-shadow:0.6px 1.6px 1.6px rgba(0,0,0,0.45);">2. Find &amp; Open your mailing</span>
<span class="t" id="t76" style="left:818.50px;top:218.00px;font-size:15.2px;line-height:18px;color:#505050;transform:scaleX(1.0258);text-shadow:0.6px 1.6px 1.6px rgba(0,0,0,0.45);">address List</span>
<span class="t" id="t77" style="left:794.50px;top:295.00px;font-size:15.2px;line-height:18px;color:#0f0f0f;transform:scaleX(1.0252);text-shadow:0.6px 1.6px 1.6px rgba(0,0,0,0.45);-webkit-text-stroke:0.15px;">3. Select 'Edit Recipient List'</span>
<span class="t" id="t78" style="left:834.50px;top:384.00px;font-size:15.2px;line-height:18px;color:#0f0f0f;transform:scaleX(1.0273);text-shadow:0.6px 1.6px 1.6px rgba(0,0,0,0.45);-webkit-text-stroke:0.15px;">4. Click 'OK'</span>
<span class="t" id="t79" style="left:352.90px;top:152.00px;font-size:6.4px;line-height:10px;color:#9a9a9a;transform:scaleX(0.9821);">Mail Merge Recipients</span>
<span class="t" id="t80" style="left:636.80px;top:152.00px;font-size:6.4px;line-height:10px;color:#8a8a8a;transform:scaleX(0.7860);">?</span>
<span class="t" id="t81" style="left:351.90px;top:167.00px;font-size:5.9px;line-height:10px;color:#1e1e1e;transform:scaleX(1.0644);white-space:pre;">This is the list of recipients that will be used in your merge.  Use the options below to add to or change your list.</span>
<span class="t" id="t82" style="left:351.90px;top:174.00px;font-size:5.9px;line-height:10px;color:#1e1e1e;transform:scaleX(1.0335);white-space:pre;">Use the checkboxes to add or remove recipients from the merge.  When your list is ready, click OK.</span>
<span class="t" id="t83" style="left:354.40px;top:184.00px;font-size:5.9px;line-height:10px;color:#1e1e1e;transform:scaleX(0.9527);">Data Source</span>
<span class="t" id="t84" style="left:429.75px;top:184.00px;font-size:5.9px;line-height:10px;color:#1e1e1e;transform:scaleX(0.9431);">last</span>
<span class="t" id="t85" style="left:475.30px;top:184.00px;font-size:5.9px;line-height:10px;color:#1e1e1e;transform:scaleX(1.0737);">first</span>
<span class="t" id="t86" style="left:514.40px;top:184.00px;font-size:5.9px;line-height:10px;color:#1e1e1e;transform:scaleX(0.9595);">title</span>
<span class="t" id="t87" style="left:546.25px;top:184.00px;font-size:5.9px;line-height:10px;color:#1e1e1e;transform:scaleX(0.9684);">company</span>
<span class="t" id="t88" style="left:597.10px;top:184.00px;font-size:5.9px;line-height:10px;color:#1e1e1e;transform:scaleX(0.9449);">address1</span>
<span class="t" id="t89" style="left:354.75px;top:198.00px;font-size:6.3px;line-height:10px;color:#ffffff;transform:scaleX(0.9831);">C:\alice\LeadsPle...</span>
<span class="t" id="t90" style="left:429.60px;top:198.00px;font-size:6.3px;line-height:10px;color:#ffffff;transform:scaleX(1.0144);">FOHN</span>
<span class="t" id="t91" style="left:475.30px;top:198.00px;font-size:6.3px;line-height:10px;color:#ffffff;transform:scaleX(0.9356);">LASZLO</span>
<span class="t" id="t92" style="left:514.60px;top:198.00px;font-size:6.3px;line-height:10px;color:#ffffff;transform:scaleX(1.0105);">MR</span>
<span class="t" id="t93" style="left:597.20px;top:198.00px;font-size:6.3px;line-height:10px;color:#ffffff;transform:scaleX(0.9806);">5048 Milano St</span>
<span class="t" id="t94" style="left:354.75px;top:208.00px;font-size:6.3px;line-height:10px;color:#1e1e1e;transform:scaleX(0.9831);">C:\alice\LeadsPle...</span>
<span class="t" id="t95" style="left:429.60px;top:208.00px;font-size:6.3px;line-height:10px;color:#1e1e1e;transform:scaleX(0.8910);">STRUNGIS</span>
<span class="t" id="t96" style="left:475.30px;top:208.00px;font-size:6.3px;line-height:10px;color:#1e1e1e;transform:scaleX(0.8333);">PETER</span>
<span class="t" id="t97" style="left:514.60px;top:208.00px;font-size:6.3px;line-height:10px;color:#1e1e1e;transform:scaleX(1.0105);">MR</span>
<span class="t" id="t98" style="left:597.20px;top:208.00px;font-size:6.3px;line-height:10px;color:#1e1e1e;transform:scaleX(0.9404);">1813 Senegal Date Dr</span>
<span class="t" id="t99" style="left:354.75px;top:218.00px;font-size:6.3px;line-height:10px;color:#1e1e1e;transform:scaleX(0.9831);">C:\alice\LeadsPle...</span>
<span class="t" id="t100" style="left:429.60px;top:218.00px;font-size:6.3px;line-height:10px;color:#1e1e1e;transform:scaleX(0.8602);">VOEGELE</span>
<span class="t" id="t101" style="left:475.30px;top:218.00px;font-size:6.3px;line-height:10px;color:#1e1e1e;transform:scaleX(0.9009);">PAUL</span>
<span class="t" id="t102" style="left:514.60px;top:218.00px;font-size:6.3px;line-height:10px;color:#1e1e1e;transform:scaleX(1.0105);">MR</span>
<span class="t" id="t103" style="left:597.20px;top:218.00px;font-size:6.3px;line-height:10px;color:#1e1e1e;transform:scaleX(0.9788);">26131 Hickory Blvd</span>
<span class="t" id="t104" style="left:354.75px;top:228.00px;font-size:6.3px;line-height:10px;color:#1e1e1e;transform:scaleX(0.9831);">C:\alice\LeadsPle...</span>
<span class="t" id="t105" style="left:429.60px;top:228.00px;font-size:6.3px;line-height:10px;color:#1e1e1e;transform:scaleX(0.9644);">JOHNSON</span>
<span class="t" id="t106" style="left:475.30px;top:228.00px;font-size:6.3px;line-height:10px;color:#1e1e1e;transform:scaleX(0.9318);">DAVID</span>
<span class="t" id="t107" style="left:514.60px;top:228.00px;font-size:6.3px;line-height:10px;color:#1e1e1e;transform:scaleX(1.0105);">MR</span>
<span class="t" id="t108" style="left:597.20px;top:228.00px;font-size:6.3px;line-height:10px;color:#1e1e1e;transform:scaleX(0.9403);">7771 Salerno Ct</span>
<span class="t" id="t109" style="left:354.75px;top:238.00px;font-size:6.3px;line-height:10px;color:#1e1e1e;transform:scaleX(0.9831);">C:\alice\LeadsPle...</span>
<span class="t" id="t110" style="left:429.60px;top:238.00px;font-size:6.3px;line-height:10px;color:#1e1e1e;transform:scaleX(0.8619);">TREAT</span>
<span class="t" id="t111" style="left:475.30px;top:238.00px;font-size:6.3px;line-height:10px;color:#1e1e1e;transform:scaleX(0.9143);">LAURA</span>
<span class="t" id="t112" style="left:514.60px;top:238.00px;font-size:6.3px;line-height:10px;color:#1e1e1e;transform:scaleX(0.9838);">MS</span>
<span class="t" id="t113" style="left:597.20px;top:238.00px;font-size:6.3px;line-height:10px;color:#1e1e1e;transform:scaleX(0.9879);">23398 Agatha Ave</span>
<span class="t" id="t114" style="left:354.75px;top:248.00px;font-size:6.3px;line-height:10px;color:#1e1e1e;transform:scaleX(0.9831);">C:\alice\LeadsPle...</span>
<span class="t" id="t115" style="left:429.60px;top:248.00px;font-size:6.3px;line-height:10px;color:#1e1e1e;transform:scaleX(0.9399);">RENDINO</span>
<span class="t" id="t116" style="left:475.30px;top:248.00px;font-size:6.3px;line-height:10px;color:#1e1e1e;transform:scaleX(0.8895);">LUCRETIA</span>
<span class="t" id="t117" style="left:514.60px;top:248.00px;font-size:6.3px;line-height:10px;color:#1e1e1e;transform:scaleX(0.9838);">MS</span>
<span class="t" id="t118" style="left:597.20px;top:248.00px;font-size:6.3px;line-height:10px;color:#1e1e1e;transform:scaleX(0.9606);">27110 Esther Dr</span>
<span class="t" id="t119" style="left:354.75px;top:258.00px;font-size:6.3px;line-height:10px;color:#1e1e1e;transform:scaleX(0.9831);">C:\alice\LeadsPle...</span>
<span class="t" id="t120" style="left:429.60px;top:258.00px;font-size:6.3px;line-height:10px;color:#1e1e1e;transform:scaleX(0.8949);">TRACY</span>
<span class="t" id="t121" style="left:475.30px;top:258.00px;font-size:6.3px;line-height:10px;color:#1e1e1e;transform:scaleX(0.9114);">VICTORIA</span>
<span class="t" id="t122" style="left:514.60px;top:258.00px;font-size:6.3px;line-height:10px;color:#1e1e1e;transform:scaleX(0.9838);">MS</span>
<span class="t" id="t123" style="left:597.20px;top:258.00px;font-size:6.3px;line-height:10px;color:#1e1e1e;transform:scaleX(0.9523);">3266 Lakeview Dr</span>
<span class="t" id="t124" style="left:354.75px;top:268.00px;font-size:6.3px;line-height:10px;color:#1e1e1e;transform:scaleX(0.9831);">C:\alice\LeadsPle...</span>
<span class="t" id="t125" style="left:429.60px;top:268.00px;font-size:6.3px;line-height:10px;color:#1e1e1e;transform:scaleX(0.9733);">SIMOLDONI</span>
<span class="t" id="t126" style="left:475.30px;top:268.00px;font-size:6.3px;line-height:10px;color:#1e1e1e;transform:scaleX(0.9384);">JOHN</span>
<span class="t" id="t127" style="left:514.60px;top:268.00px;font-size:6.3px;line-height:10px;color:#1e1e1e;transform:scaleX(1.0105);">MR</span>
<span class="t" id="t128" style="left:597.20px;top:268.00px;font-size:6.3px;line-height:10px;color:#1e1e1e;transform:scaleX(0.9523);">2631 Lakeview Dr</span>
<span class="t" id="t129" style="left:354.75px;top:278.00px;font-size:6.3px;line-height:10px;color:#1e1e1e;transform:scaleX(0.9831);clip-path:inset(0 0 7px 0);">C:\alice\LeadsPle...</span>
<span class="t" id="t130" style="left:429.60px;top:278.00px;font-size:6.3px;line-height:10px;color:#1e1e1e;transform:scaleX(0.9083);clip-path:inset(0 0 7px 0);">KELLIS</span>
<span class="t" id="t131" style="left:475.30px;top:278.00px;font-size:6.3px;line-height:10px;color:#1e1e1e;transform:scaleX(0.9499);clip-path:inset(0 0 7px 0);">PATRICIA</span>
<span class="t" id="t132" style="left:514.60px;top:278.00px;font-size:6.3px;line-height:10px;color:#1e1e1e;transform:scaleX(0.9838);clip-path:inset(0 0 7px 0);">MS</span>
<span class="t" id="t133" style="left:597.20px;top:278.00px;font-size:6.3px;line-height:10px;color:#1e1e1e;transform:scaleX(0.9149);clip-path:inset(0 0 7px 0);">1401 Hampton Ln</span>
<span class="t" id="t134" style="left:351.90px;top:291.00px;font-size:5.9px;line-height:10px;color:#1e1e1e;transform:scaleX(0.9924);">Data Source</span>
<span class="t" id="t135" style="left:451.25px;top:291.00px;font-size:5.9px;line-height:10px;color:#1e1e1e;transform:scaleX(1.0600);">Refine recipient list</span>
<span class="t" id="t136" style="left:358.75px;top:303.00px;font-size:5.9px;line-height:10px;color:#1e1e1e;transform:scaleX(0.9861);">C:\alice\LeadsPlease Lists\lea</span>
<span class="t" id="t137" style="left:467.50px;top:303.00px;font-size:5.9px;line-height:10px;color:#1264c4;transform:scaleX(0.9861);text-decoration:underline;text-decoration-thickness:0.45px;text-underline-offset:0.7px;text-decoration-color:rgba(18,100,196,0.65);">Sort...</span>
<span class="t" id="t138" style="left:467.50px;top:316.00px;font-size:5.9px;line-height:10px;color:#1264c4;transform:scaleX(1.0233);text-decoration:underline;text-decoration-thickness:0.45px;text-underline-offset:0.7px;text-decoration-color:rgba(18,100,196,0.65);">Filter...</span>
<span class="t" id="t139" style="left:467.50px;top:327.00px;font-size:5.9px;line-height:10px;color:#1264c4;transform:scaleX(1.0442);text-decoration:underline;text-decoration-thickness:0.45px;text-underline-offset:0.7px;text-decoration-color:rgba(18,100,196,0.65);">Find duplicates...</span>
<span class="t" id="t140" style="left:467.50px;top:340.00px;font-size:5.9px;line-height:10px;color:#1264c4;transform:scaleX(1.0551);text-decoration:underline;text-decoration-thickness:0.45px;text-underline-offset:0.7px;text-decoration-color:rgba(18,100,196,0.65);">Find recipient...</span>
<span class="t" id="t141" style="left:467.30px;top:352.00px;font-size:5.9px;line-height:10px;color:#1264c4;transform:scaleX(1.0169);text-decoration:underline;text-decoration-thickness:0.45px;text-underline-offset:0.7px;text-decoration-color:rgba(18,100,196,0.65);">Validate addresses...</span>
<span class="t" id="t142" style="left:368.00px;top:358.00px;font-size:5.9px;line-height:10px;color:#8a8a8a;transform:scaleX(1.0456);">Edit...</span>
<span class="t" id="t143" style="left:410.00px;top:358.00px;font-size:5.9px;line-height:10px;color:#8a8a8a;transform:scaleX(1.0174);">Refresh</span>
<span class="t" id="t144" style="left:647.20px;top:377.00px;font-size:5.9px;line-height:10px;color:#111;transform:scaleX(0.8925);">OK</span>
<div class="a" style="left:1023px;top:0;width:1px;height:554px;background:#f6f6f6"></div>
<!-- ===== arrows ===== -->
<svg width="1024" height="554" viewBox="0 0 1024 554" style="left:0;top:0;pointer-events:none">
  <defs>
    <filter id="ash" x="-5%" y="-20%" width="110%" height="140%">
      <feDropShadow dx="0.4" dy="1.9" stdDeviation="1.15" flood-color="#000" flood-opacity="0.55"/>
    </filter>
  </defs>
  <g filter="url(#ash)" fill="#fb4141" stroke="#fb4141" stroke-linecap="round" stroke-linejoin="round">
    <line x1="748.5" y1="126.3" x2="128.5" y2="82.1" stroke-width="5.5"/>
    <polygon points="115.8,81.25 130.3,74.7 129.3,89.7" stroke-width="0.6"/>
    <line x1="773.2" y1="298.5" x2="180.5" y2="76.9" stroke-width="5.5"/>
    <polygon points="168.1,71.9 183.8,69.8 178.6,83.8" stroke-width="0.6"/>
    <line x1="823" y1="391.2" x2="688.5" y2="384.6" stroke-width="5.5"/>
    <polygon points="674.6,383.9 690,376.6 689.2,392.6" stroke-width="0.6"/>
  </g>
</svg>

</div></body></html>
